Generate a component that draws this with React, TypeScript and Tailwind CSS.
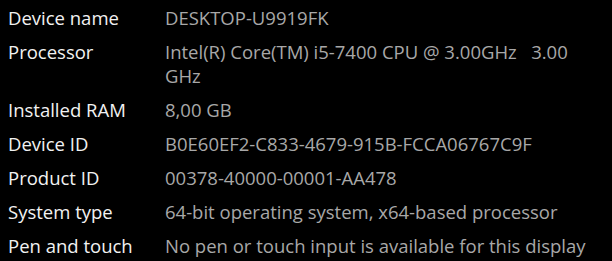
const ROWS: { label: string; value: string[] }[] = [
  { label: 'Device name', value: ['DESKTOP-U9919FK'] },
  { label: 'Processor', value: ['Intel(R) Core(TM) i5-7400 CPU @ 3.00GHz   3.00', 'GHz'] },
  { label: 'Installed RAM', value: ['8,00 GB'] },
  { label: 'Device ID', value: ['B0E60EF2-C833-4679-915B-FCCA06767C9F'] },
  { label: 'Product ID', value: ['00378-40000-00001-AA478'] },
  { label: 'System type', value: ['64-bit operating system, x64-based processor'] },
  { label: 'Pen and touch', value: ['No pen or touch input is available for this display'] },
];

export default function App() {
  return (
    <div
      className="w-[612px] h-[261px] bg-black overflow-hidden pl-2 pt-[6px] flex flex-col gap-[10px] text-[18.5px] leading-[24px]"
      style={{ fontFamily: '"Open Sans", "Noto Sans", sans-serif' }}
    >
      {ROWS.map((r) => (
        <div key={r.label} className="flex">
          <div className="w-[157px] shrink-0 text-[#f2f2f2]">{r.label}</div>
          <div className="text-[#a8a8a8] whitespace-pre">
            {r.value.map((v) => (
              <div key={v}>{v}</div>
            ))}
          </div>
        </div>
      ))}
    </div>
  );
}
